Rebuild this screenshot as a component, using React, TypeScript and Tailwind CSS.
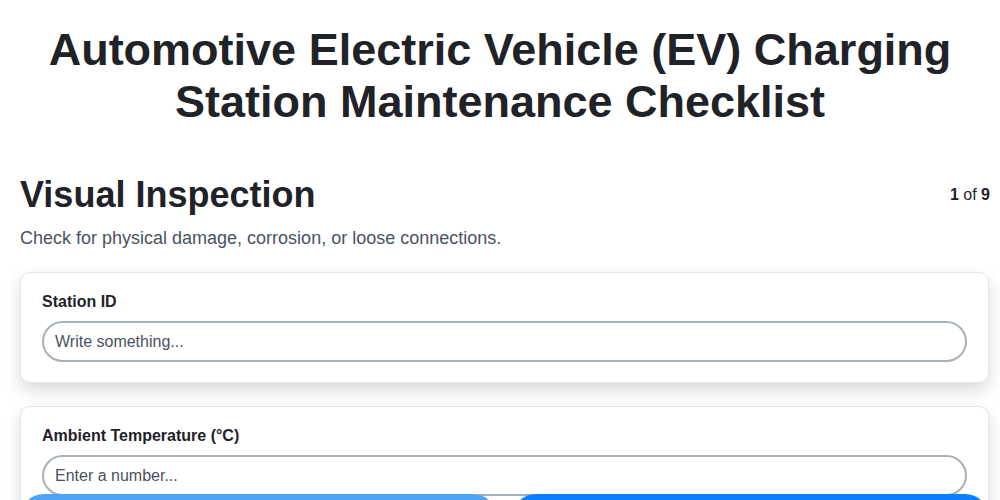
import React from 'react';

const font = { fontFamily: '"Liberation Sans", Arial, sans-serif' };

function Field({ label, placeholder, type }: { label: string; placeholder: string; type: string }) {
  return (
    <div className="bg-white rounded-[10px] border border-[#e6e7eb] shadow-[0_7px_16px_rgba(0,0,0,0.15)] px-[21px] pt-[19px] pb-[20px]">
      <label className="block text-[16px] font-bold text-[#1f2328] mb-[9px] leading-[20px]">{label}</label>
      <input
        type={type}
        placeholder={placeholder}
        className="w-full h-[41px] rounded-full border-2 border-[#a8b0ba] px-[11px] text-[16px] text-[#1f2328] placeholder:text-[#4a5260] outline-none bg-white"
      />
    </div>
  );
}

export default function App() {
  return (
    <div className="min-h-screen bg-white text-[#1f2328]" style={font}>
      <h1 className="text-center text-[45px] font-bold leading-[52px] pt-[24px] px-5">
        Automotive Electric Vehicle (EV) Charging Station Maintenance Checklist
      </h1>

      <div className="pl-5 pr-[10px] mt-[45px]">
        <div className="flex items-start justify-between">
          <h2 className="text-[36px] font-bold leading-[44px]">Visual Inspection</h2>
          <div className="text-[16px] mt-[10px]">
            <span className="font-bold">1</span> of <span className="font-bold">9</span>
          </div>
        </div>
        <p className="text-[18px] text-[#4a5260] mt-[9px] leading-[24px]">
          Check for physical damage, corrosion, or loose connections.
        </p>

        <div className="mr-[1px] mt-[22px] flex flex-col gap-[23px]">
          <Field label="Station ID" placeholder="Write something..." type="text" />
          <Field label="Ambient Temperature (°C)" placeholder="Enter a number..." type="number" />
        </div>

        <div className="relative mr-[1px] -mt-[23px] flex gap-[15px] pb-4">
          <button className="flex-1 h-[48px] rounded-full bg-[#4fa3f7] text-white font-bold text-[16px]">
            Previous
          </button>
          <button className="flex-1 h-[48px] rounded-full bg-[#0a80ff] text-white font-bold text-[16px]">
            Next
          </button>
        </div>
      </div>
    </div>
  );
}
